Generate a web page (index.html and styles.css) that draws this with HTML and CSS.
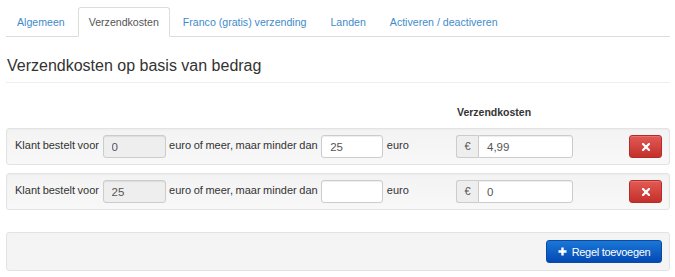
FILE: index.html
```html
<!DOCTYPE html>
<html lang="nl">
<head>
    <meta charset="UTF-8">
    <meta name="viewport" content="width=device-width, initial-scale=1.0">
    <title>Verzendkosten</title>
    <link rel="stylesheet" href="styles.css">
</head>
<body>
    <ul class="tabs">
        <li><a href="#">Algemeen</a></li>
        <li class="active"><a href="#">Verzendkosten</a></li>
        <li><a href="#">Franco (gratis) verzending</a></li>
        <li><a href="#">Landen</a></li>
        <li><a href="#">Activeren / deactiveren</a></li>
    </ul>

    <h3 class="page-title">Verzendkosten op basis van bedrag</h3>

    <div class="col-head">
        <div class="col-left"></div>
        <div class="col-price">Verzendkosten</div>
    </div>

    <div class="rule-row">
        <div class="col-left">
            Klant bestelt voor
            <input class="field field-from" type="text" value="0" disabled>
            euro of meer, maar minder dan
            <input class="field field-to" type="text" value="25">
            euro
        </div>
        <div class="col-price input-group">
            <span class="addon">€</span>
            <input class="field field-price" type="text" value="4,99">
        </div>
        <button class="btn btn-danger" title="Verwijderen">
            <svg width="8" height="8" viewBox="0 0 8 8"><path d="M1 1 L7 7 M7 1 L1 7" stroke="#fff" stroke-width="2.2" stroke-linecap="square"/></svg>
        </button>
    </div>

    <div class="rule-row">
        <div class="col-left">
            Klant bestelt voor
            <input class="field field-from" type="text" value="25" disabled>
            euro of meer, maar minder dan
            <input class="field field-to" type="text" value="">
            euro
        </div>
        <div class="col-price input-group">
            <span class="addon">€</span>
            <input class="field field-price" type="text" value="0">
        </div>
        <button class="btn btn-danger" title="Verwijderen">
            <svg width="8" height="8" viewBox="0 0 8 8"><path d="M1 1 L7 7 M7 1 L1 7" stroke="#fff" stroke-width="2.2" stroke-linecap="square"/></svg>
        </button>
    </div>

    <div class="actions">
        <button class="btn btn-primary">
            <svg width="9" height="9" viewBox="0 0 9 9"><path d="M4.5 0.5 V8.5 M0.5 4.5 H8.5" stroke="#fff" stroke-width="2.4"/></svg>
            Regel toevoegen
        </button>
    </div>
</body>
</html>
```

FILE: styles.css
```css
body {
    margin: 7px 5px 0 6px;
    font-family: "Liberation Sans", Arial, sans-serif;
    font-size: 11px;
    color: #333;
    background: #fff;
}

/* tabs */
.tabs {
    display: flex;
    list-style: none;
    margin: 0;
    padding: 0;
    border-bottom: 1px solid #ddd;
    font-size: 10.6px;
}
.tabs li { margin-bottom: -1px; margin-right: 2px; }
.tabs a {
    display: block;
    padding: 1px 10px 0;
    line-height: 27px;
    border: 1px solid transparent;
    border-radius: 3px 3px 0 0;
    color: #428bca;
    text-decoration: none;
}
.tabs .active a {
    color: #555;
    background: #fff;
    border-color: #ddd #ddd transparent;
}

.page-title {
    margin: 19px 0 0;
    padding: 0 0 6px 1px;
    font-size: 16px;
    font-weight: normal;
    line-height: 20px;
    color: #333;
    border-bottom: 1px solid #eee;
}

/* columns */
.col-head, .rule-row { display: flex; align-items: center; }
.col-left { flex: 0 0 441px; }
.col-price { flex: 0 0 117px; min-width: 0; }

.col-head {
    margin-top: 22px;
    padding-left: 9px;
    font-size: 10.5px;
    font-weight: bold;
    line-height: 15px;
}
.col-head .col-price { padding-left: 1px; }

.rule-row {
    margin-top: 8px;
    padding: 6px 7px 6px 8px;
    font-size: 11px;
    word-spacing: -0.5px;
    background: linear-gradient(#f3f3f3, #f8f8f8);
    border: 1px solid #e3e3e3;
    border-radius: 3px;
    box-shadow: inset 0 1px 2px rgba(0, 0, 0, 0.03);
}

.field {
    height: 23px;
    box-sizing: border-box;
    padding: 0 8px;
    font-family: inherit;
    font-size: 11.5px;
    color: #555;
    background: #fff;
    border: 1px solid #ccc;
    border-radius: 3px;
    box-shadow: inset 0 1px 1px rgba(0, 0, 0, 0.075);
    vertical-align: middle;
}
.field:disabled { background: #eee; color: #555; }
.field-from { width: 63px; margin: 0 1px; }
.field-to { width: 62px; margin: 0 1px; }

.input-group { display: flex; }
.addon {
    flex: 0 0 22px;
    box-sizing: border-box;
    height: 23px;
    line-height: 21px;
    text-align: center;
    color: #555;
    background: #eee;
    border: 1px solid #ccc;
    border-right: none;
    border-radius: 3px 0 0 3px;
}
.field-price { flex: 1; width: 0; min-width: 0; border-radius: 0 3px 3px 0; }

.btn {
    height: 23px;
    border-radius: 3px;
    cursor: pointer;
    font-family: inherit;
    font-size: 11px;
    display: inline-flex;
    align-items: center;
    justify-content: center;
}
.btn-danger {
    margin-left: auto;
    flex: 0 0 33px;
    padding: 0;
    background: linear-gradient(#e25a55, #c4302b);
    border: 1px solid #b52b27;
    box-shadow: inset 0 1px 0 rgba(255, 255, 255, 0.15);
}
.btn-primary {
    width: 116px;
    gap: 5px;
    padding: 0 8px;
    color: #fff;
    letter-spacing: -0.3px;
    background: linear-gradient(#1a78d6, #0349b4);
    border: 1px solid #0a4aa6;
}

.actions {
    display: flex;
    justify-content: flex-end;
    margin-top: 22px;
    padding: 7px 7px;
    background: #f4f4f4;
    border: 1px solid #e3e3e3;
    border-radius: 3px;
}
```
